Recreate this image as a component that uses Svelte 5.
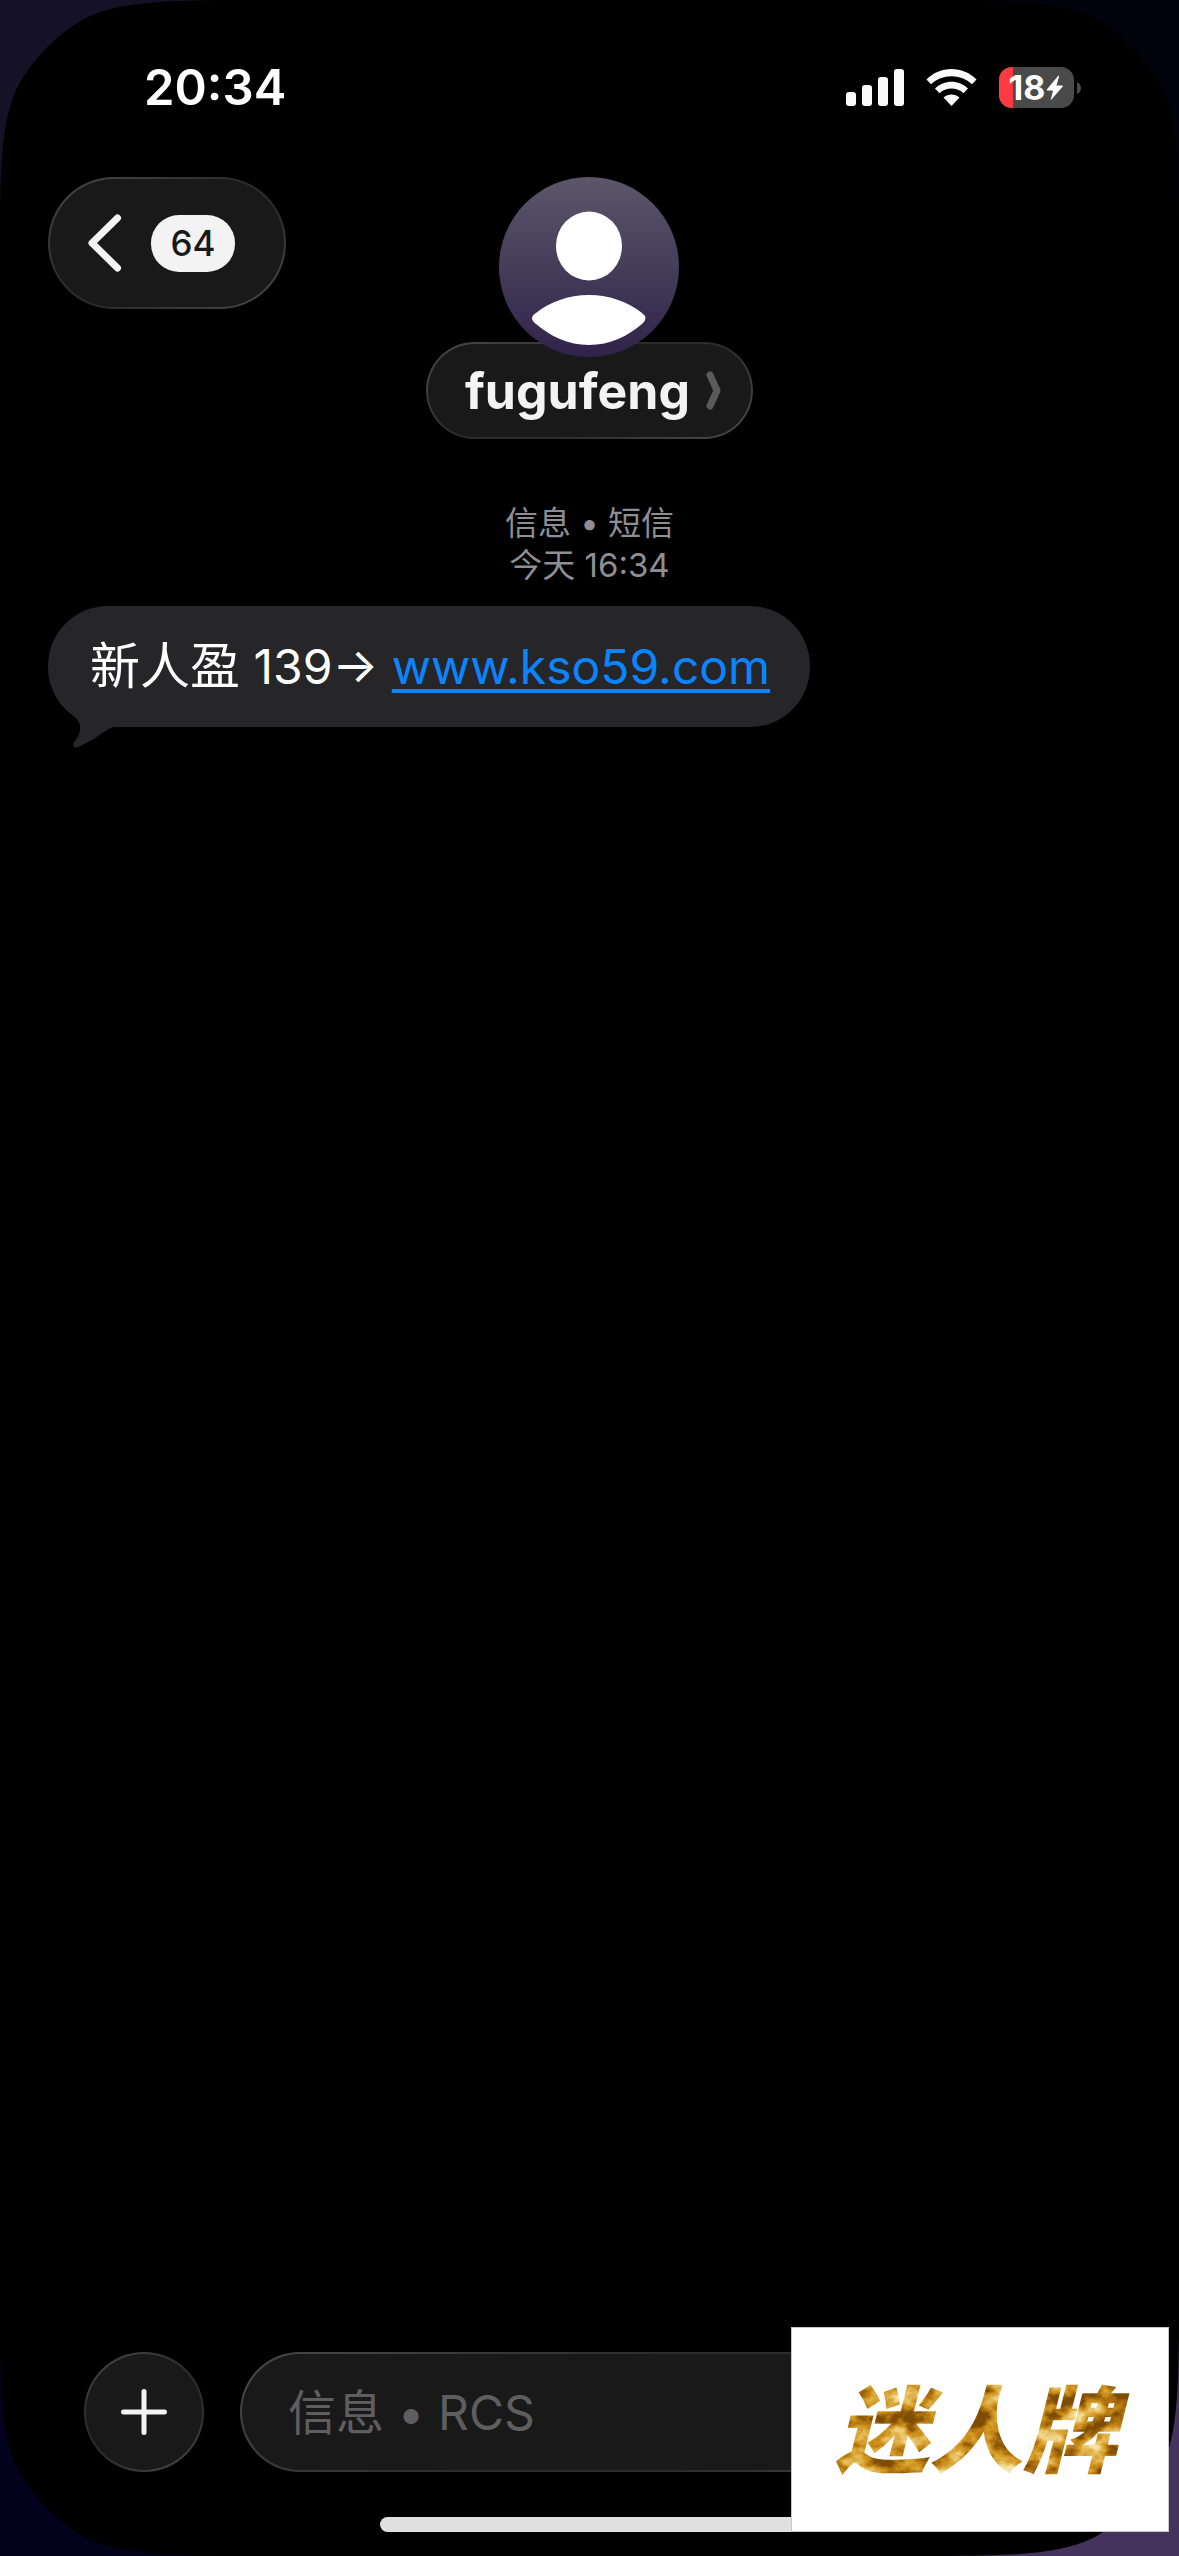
<script>
  let contact = "fugufeng";
  let unread = 64;
  let battery = 18;
  let draft = "";

  const bars = [14, 21, 29, 37];
  const corners = ["top-left", "top-right", "bottom-left", "bottom-right"];
</script>

<svelte:head>
  <title>{contact}</title>
</svelte:head>

<div class="phone">
  {#each corners as corner}
    <svg class="corner {corner}" viewBox="0 0 240 240" aria-hidden="true">
      <path d="M0 0H240C150 0 118 4 88 17C60 31 31 60 17 88C4 118 0 150 0 240Z" />
    </svg>
  {/each}

  <div class="status">
    <time>20:34</time>
    <div class="indicators">
      <div class="signal">
        {#each bars as height}
          <span style="height: {height}px"></span>
        {/each}
      </div>
      <svg class="wifi" viewBox="0 0 51 38" aria-label="Wi-Fi">
        <path d="M0.500 10.500C14-3.500 37-3.500 50.500 10.500L46 15.200C35 4.500 16 4.500 5 15.200Z" />
        <path d="M9 19.500C18 10.500 33 10.500 42 19.500L37.500 24.200C31 18 20 18 13.500 24.200Z" />
        <path d="M17.500 28.500C22 24.500 29 24.500 33.500 28.500L25.500 37Z" />
      </svg>
      <div class="battery">
        <div class="cell">
          <span class="level" style="width: {battery}%"></span>
          <span class="percent">{battery}</span>
          <svg class="bolt" viewBox="0 0 18 26" aria-hidden="true">
            <path d="M12.500 0.500L0.800 14.500Q0.500 15.500 1.500 15.500H7L4.500 25.500L16.800 11.500Q17.500 10.500 16 10.500H10.500L13.200 1Z" />
          </svg>
        </div>
        <svg class="nub" viewBox="0 0 4 12" aria-hidden="true">
          <path d="M0 0Q4 2 4 6Q4 10 0 12Z" />
        </svg>
      </div>
    </div>
  </div>

  <header>
    <button type="button" class="back glass" aria-label="返回">
      <svg viewBox="0 0 34 58" aria-hidden="true">
        <path d="M29.500 4L4 29L29.500 54" />
      </svg>
      <span class="badge">{unread}</span>
    </button>
    <div class="contact">
      <svg class="avatar" viewBox="0 0 180 180" aria-hidden="true">
        <defs>
          <linearGradient id="avatar-fill" x1="0" y1="0" x2="0" y2="1">
            <stop offset="0" stop-color="#5b5769" />
            <stop offset="1" stop-color="#30234a" />
          </linearGradient>
        </defs>
        <circle cx="90" cy="90" r="90" fill="url(#avatar-fill)" />
        <ellipse cx="90" cy="69" rx="33" ry="34.500" fill="#fff" />
        <path
          d="M90 118C111 118 129 125 143 136Q150 141 143 147C129 159 111 168 90 168C69 168 51 159 37 147Q29 141 37 136C51 125 69 118 90 118Z"
          fill="#fff"
        />
      </svg>
      <button type="button" class="name glass">
        {contact}
        <svg viewBox="0 0 15 39" aria-hidden="true">
          <path d="M4 4L11 19.500L4 35" />
        </svg>
      </button>
    </div>
  </header>

  <main>
    <p class="stamp">信息 • 短信<br />今天 16:34</p>
    <div class="bubble">
      <p><span class="han">新人盈</span> 139→ <a href="http://www.kso59.com">www.kso59.com</a></p>
      <svg class="tail" viewBox="0 0 50 46" aria-hidden="true">
        <path d="M3 7C10 13 13 18 12 24C11 30 8 34 6 36C4 39 6 43 10 41C22 36 30 30 36 26C40 23 43 21 48 21L40 0Z" />
      </svg>
    </div>
  </main>

  <footer>
    <div class="composer">
      <button type="button" class="add glass" aria-label="添加">
        <svg viewBox="0 0 46 46" aria-hidden="true">
          <path d="M23 2.500V43.500M2.500 23H43.500" />
        </svg>
      </button>
      <input class="glass" type="text" aria-label="信息" placeholder="信息 • RCS" bind:value={draft} />
    </div>
    <div class="home"></div>
  </footer>

  <div class="stamp-logo">
    <svg viewBox="0 0 376 203">
      <defs>
        <filter id="gold" x="-5%" y="-5%" width="110%" height="110%" color-interpolation-filters="sRGB">
          <feTurbulence type="fractalNoise" baseFrequency="0.035 0.05" numOctaves="4" seed="7" />
          <feColorMatrix
            values="2.2 0 0 0 -0.7
                    2.2 0 0 0 -0.7
                    2.2 0 0 0 -0.7
                    0 0 0 0 1"
          />
          <feComponentTransfer>
            <feFuncR type="table" tableValues="0.5 0.66 0.8 0.87 0.93 0.97" />
            <feFuncG type="table" tableValues="0.3 0.43 0.56 0.68 0.8 0.9" />
            <feFuncB type="table" tableValues="0.02 0.06 0.1 0.26 0.48 0.66" />
          </feComponentTransfer>
          <feComposite in2="SourceAlpha" operator="in" />
        </filter>
      </defs>
      <text x="184" y="137" text-anchor="middle" filter="url(#gold)">迷人牌</text>
    </svg>
  </div>
</div>

<style>
  :global(body) {
    margin: 0;
    background: #000;
  }

  .phone {
    position: relative;
    display: flex;
    flex-direction: column;
    min-height: 100vh;
    overflow: hidden;
    background: #000;
    color: #fff;
    font-family: Inter, "Noto Sans CJK SC", sans-serif;
  }

  button,
  input {
    margin: 0;
    padding: 0;
    box-sizing: border-box;
    color: #f3f3f3;
    font-family: inherit;
  }

  svg {
    display: block;
    flex: none;
  }

  /* wallpaper showing behind the rounded screen */
  .corner {
    position: absolute;
    width: 240px;
    height: 240px;
    pointer-events: none;
  }
  .top-left {
    top: 0;
    left: 0;
    fill: #151126;
  }
  .top-right {
    top: 0;
    right: 0;
    transform: scaleX(-1);
    fill: #02020d;
  }
  .bottom-left {
    bottom: 0;
    left: 0;
    transform: scaleY(-1);
    fill: #02021c;
  }
  .bottom-right {
    right: 0;
    bottom: 0;
    transform: scale(-1);
    fill: #45335d;
  }

  .glass {
    border: 2px solid transparent;
    background:
      linear-gradient(#191919, #191919) padding-box,
      linear-gradient(150deg, #4a4a4a, #2c2c2c 40%, #2c2c2c 60%, #4a4a4a) border-box;
  }

  .status {
    display: flex;
    align-items: center;
    justify-content: space-between;
    height: 175px;
    padding: 0 98px 2px 144px;
  }
  .status time {
    font-size: 49px;
    font-weight: 600;
  }
  .indicators {
    display: flex;
    align-items: center;
    gap: 22px;
  }
  .signal {
    display: flex;
    align-items: flex-end;
    gap: 6px;
  }
  .signal span {
    width: 10px;
    border-radius: 3px;
    background: #fafafa;
  }
  .wifi {
    width: 51px;
    height: 38px;
    fill: #fafafa;
  }
  .battery {
    display: flex;
    align-items: center;
    gap: 3px;
  }
  .cell {
    position: relative;
    display: flex;
    align-items: center;
    justify-content: center;
    gap: 1px;
    width: 75px;
    height: 41px;
    overflow: hidden;
    border-radius: 13px;
    background: #4a4a4a;
  }
  .level {
    position: absolute;
    top: 0;
    bottom: 0;
    left: 0;
    background: #ff3a40;
  }
  .percent {
    position: relative;
    font-size: 34px;
    font-weight: 700;
  }
  .bolt {
    width: 18px;
    height: 26px;
    fill: #fff;
  }
  .nub {
    width: 4px;
    height: 12px;
    fill: #4a4a4a;
  }

  header {
    display: grid;
    grid-template-columns: 1fr auto 1fr;
    align-items: start;
    padding: 0 48px;
  }
  .back {
    display: flex;
    align-items: center;
    justify-self: start;
    gap: 29px;
    height: 132px;
    padding: 0 49px 0 38px;
    border-radius: 66px;
  }
  .back svg {
    width: 34px;
    height: 58px;
  }
  .back path,
  .name path,
  .add path {
    fill: none;
    stroke: #f3f3f3;
    stroke-width: 7;
    stroke-linecap: round;
    stroke-linejoin: round;
  }
  .badge {
    width: 84px;
    border-radius: 28px;
    background: #f3f3f3;
    color: #191919;
    font-size: 35px;
    font-weight: 500;
    line-height: 57px;
    text-align: center;
  }
  .contact {
    display: flex;
    flex-direction: column;
    align-items: center;
  }
  .avatar {
    z-index: 1;
    width: 180px;
    height: 180px;
  }
  .name {
    display: flex;
    align-items: center;
    gap: 16px;
    height: 97px;
    margin-top: -15px;
    padding: 0 30px 0 37px;
    border-radius: 49px;
    font-size: 50px;
    font-weight: 700;
  }
  .name svg {
    width: 15px;
    height: 39px;
  }
  .name path {
    stroke: #5a5a5a;
  }

  main {
    flex: 1;
    padding: 63px 48px 0;
  }
  p {
    margin: 0;
  }
  .stamp {
    margin-bottom: 20px;
    color: #8e8e93;
    font-size: 33px;
    line-height: 42px;
    text-align: center;
  }
  .bubble {
    position: relative;
    width: fit-content;
    padding: 0 40px 0 42px;
    border-radius: 60px;
    background: #262628;
    font-size: 48px;
    line-height: 121px;
  }
  .han {
    font-size: 50px;
  }
  .bubble a {
    color: #0a84ff;
    text-decoration-thickness: 4px;
    text-underline-offset: 5px;
  }
  .tail {
    position: absolute;
    top: 100px;
    left: 20px;
    width: 50px;
    height: 46px;
    fill: #262628;
  }

  footer {
    display: flex;
    flex-direction: column;
    align-items: center;
    gap: 45px;
    padding-bottom: 24px;
  }
  .composer {
    display: flex;
    gap: 36px;
    align-self: stretch;
    padding: 0 84px;
  }
  .add {
    display: flex;
    align-items: center;
    justify-content: center;
    flex: none;
    width: 120px;
    height: 120px;
    border-radius: 50%;
  }
  .add svg {
    width: 46px;
    height: 46px;
  }
  .add path {
    stroke-width: 5;
  }
  input {
    flex: 1;
    min-width: 0;
    height: 120px;
    padding: 0 46px;
    border-radius: 60px;
    font-size: 48px;
  }
  input::placeholder {
    color: #5e5e60;
    opacity: 1;
  }
  .home {
    width: 420px;
    height: 15px;
    border-radius: 8px;
    background: #e0e0e0;
  }

  .stamp-logo {
    position: absolute;
    right: 10px;
    bottom: 24px;
    width: 376px;
    border: 1px solid #c8c8c8;
    background: #fff;
  }
  .stamp-logo text {
    font-family: "Noto Sans CJK SC", sans-serif;
    font-size: 94px;
    font-style: italic;
    font-weight: 900;
  }
</style>
